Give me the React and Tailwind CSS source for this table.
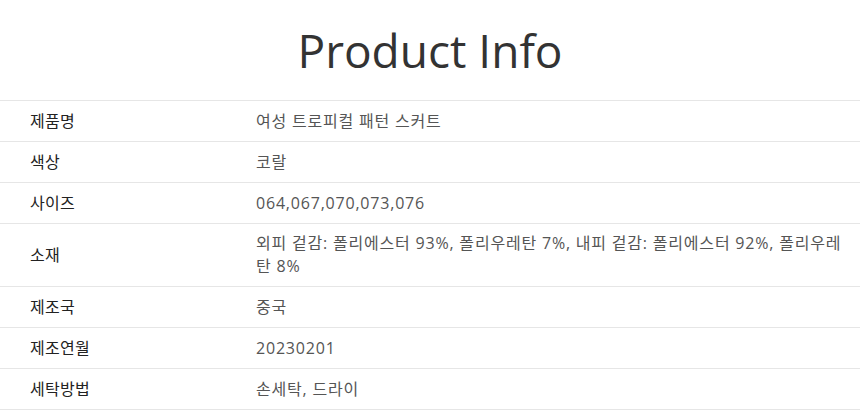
import React from "react";

const rows = [
  { label: "제품명", value: "여성 트로피컬 패턴 스커트" },
  { label: "색상", value: "코랄" },
  { label: "사이즈", value: "064,067,070,073,076" },
  {
    label: "소재",
    value: "외피 겉감: 폴리에스터 93%, 폴리우레탄 7%, 내피 겉감: 폴리에스터 92%, 폴리우레탄 8%",
  },
  { label: "제조국", value: "중국" },
  { label: "제조연월", value: "20230201" },
  { label: "세탁방법", value: "손세탁, 드라이" },
];

export default function App() {
  return (
    <div
      className="w-[860px] h-[410px] bg-white overflow-hidden"
      style={{ fontFamily: '"Open Sans", "Noto Sans CJK KR", sans-serif' }}
    >
      <h1 className="h-[100px] flex items-center justify-center text-[46px] text-[#333] font-normal">
        Product Info
      </h1>
      <table className="w-full border-collapse border-t border-[#e6e6e6]">
        <tbody>
          {rows.map((row) => (
            <tr key={row.label} className="border-b border-[#e6e6e6]">
              <td className="w-[256px] pl-[30px] py-[8px] h-[41px] text-[16px] font-normal tracking-[0.3px] text-[#222] align-middle">
                {row.label}
              </td>
              <td className="pr-[12px] py-[8px] h-[41px] text-[16px] leading-[23px] tracking-[0.8px] text-[#555] align-middle">
                {row.value}
              </td>
            </tr>
          ))}
        </tbody>
      </table>
    </div>
  );
}
